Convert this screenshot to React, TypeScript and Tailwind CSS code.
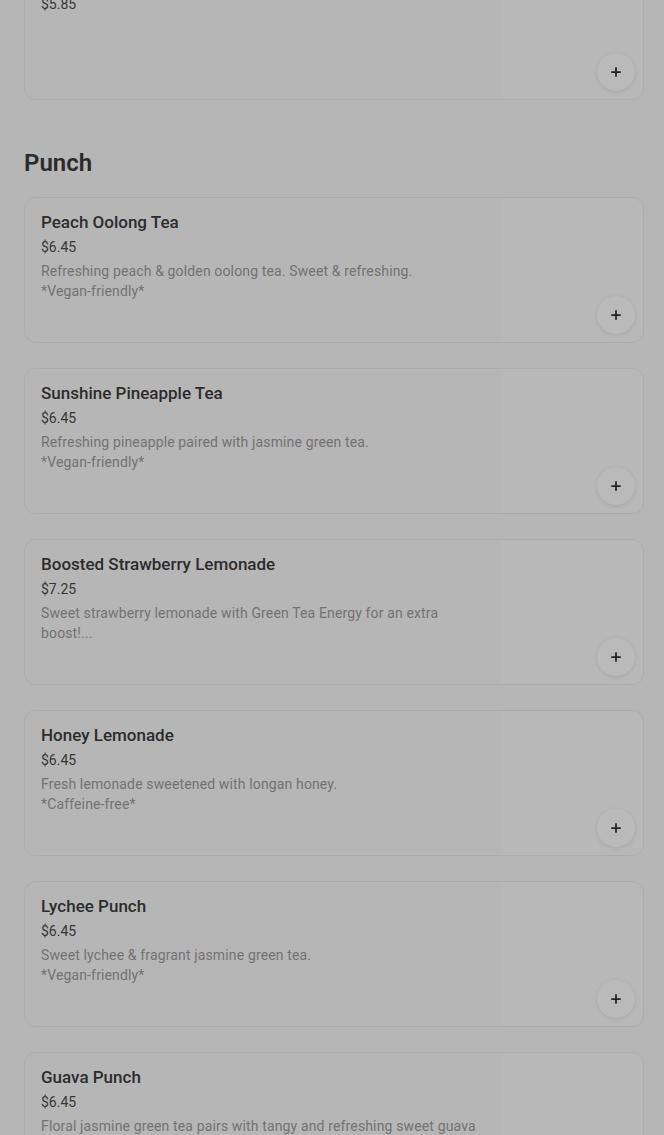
import { Plus } from "lucide-react";

type Item = {
  name: string;
  price: string;
  lines: string[];
};

const punch: Item[] = [
  {
    name: "Peach Oolong Tea",
    price: "$6.45",
    lines: ["Refreshing peach & golden oolong tea. Sweet & refreshing.", "*Vegan-friendly*"],
  },
  {
    name: "Sunshine Pineapple Tea",
    price: "$6.45",
    lines: ["Refreshing pineapple paired with jasmine green tea.", "*Vegan-friendly*"],
  },
  {
    name: "Boosted Strawberry Lemonade",
    price: "$7.25",
    lines: ["Sweet strawberry lemonade with Green Tea Energy for an extra", "boost!..."],
  },
  {
    name: "Honey Lemonade",
    price: "$6.45",
    lines: ["Fresh lemonade sweetened with longan honey.", "*Caffeine-free*"],
  },
  {
    name: "Lychee Punch",
    price: "$6.45",
    lines: ["Sweet lychee & fragrant jasmine green tea.", "*Vegan-friendly*"],
  },
  {
    name: "Guava Punch",
    price: "$6.45",
    lines: ["Floral jasmine green tea pairs with tangy and refreshing sweet guava", "juice."],
  },
];

function MenuCard({ item }: { item: Item }) {
  return (
    <div className="relative flex h-[146px] shrink-0 overflow-hidden rounded-xl border border-[#acacac] bg-[#b6b6b6]">
      <div className="flex-1 pl-4 pt-3 pr-4">
        <h3 className="text-[17px] leading-6 font-medium text-[#2c2c2c]">{item.name}</h3>
        <p className="mt-[3px] text-sm leading-5 text-[#363636]">{item.price}</p>
        <div className="mt-1 text-sm leading-5 tracking-[0.01em] text-[#727272]">
          {item.lines.map((l, i) => (
            <p key={i}>{l}</p>
          ))}
        </div>
      </div>
      <div className="w-[142px] shrink-0 bg-[#b8b8b8]" />
      <button className="absolute right-2 bottom-2 flex h-[38px] w-[38px] items-center justify-center rounded-full bg-[#bababa] shadow-[0_1px_4px_rgba(0,0,0,0.1)]">
        <Plus size={14} strokeWidth={3} className="text-[#222222]" />
      </button>
    </div>
  );
}

export default function App() {
  return (
    <div
      className="h-[1135px] overflow-hidden bg-[#b6b6b6] pl-6 pr-5"
      style={{ fontFamily: "Roboto, 'Liberation Sans', sans-serif" }}
    >
      <div className="-mt-[46px]">
        <MenuCard item={{ name: "Jasmine Green Tea", price: "$5.85", lines: [] }} />
      </div>
      <h2 className="mt-[47px] mb-[18px] text-2xl leading-8 font-semibold text-[#2a2a2a]">Punch</h2>
      <div className="flex flex-col gap-[25px]">
        {punch.map((item) => (
          <MenuCard key={item.name} item={item} />
        ))}
      </div>
    </div>
  );
}
